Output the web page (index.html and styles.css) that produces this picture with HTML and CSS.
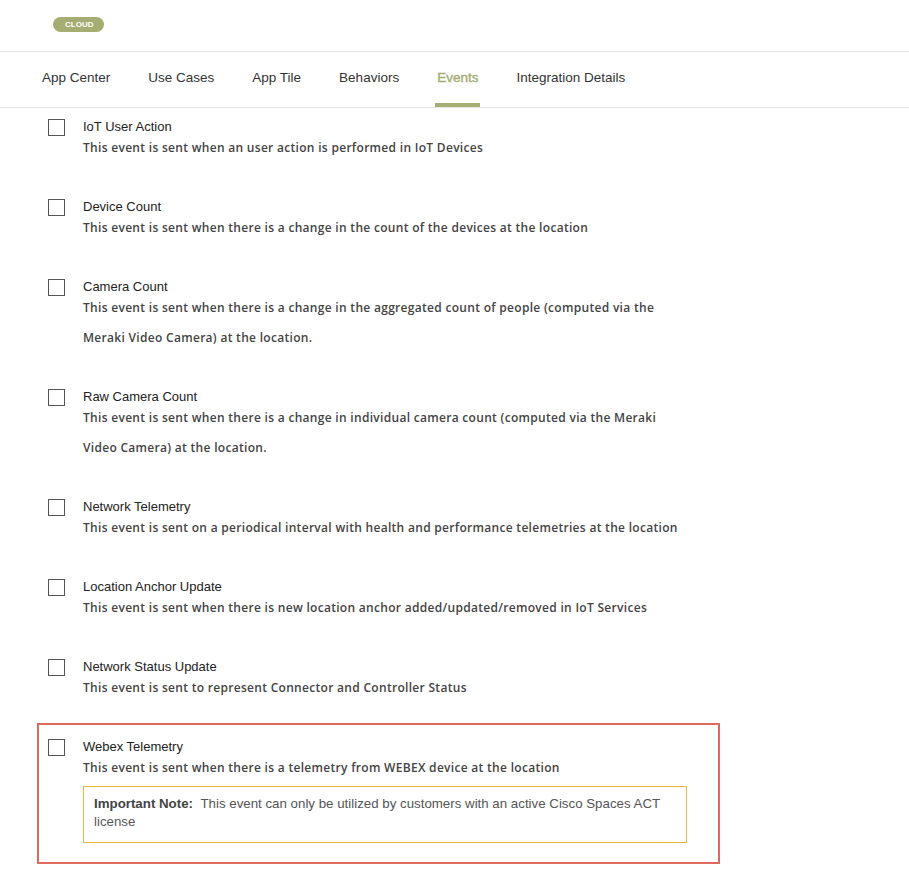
FILE: index.html
```html
<!DOCTYPE html>
<html lang="en">
<head>
  <meta charset="UTF-8">
  <title>Events</title>
  <link rel="stylesheet" href="styles.css">
</head>
<body>
  <div class="top">
    <span class="badge">CLOUD</span>
  </div>

  <nav class="tabs">
    <a class="tab">App Center</a>
    <a class="tab">Use Cases</a>
    <a class="tab">App Tile</a>
    <a class="tab">Behaviors</a>
    <a class="tab active">Events</a>
    <a class="tab">Integration Details</a>
  </nav>

  <div class="events">
    <div class="event">
      <span class="box"></span>
      <div class="body">
        <div class="name">IoT User Action</div>
        <div class="desc">This event is sent when an user action is performed in IoT Devices</div>
      </div>
    </div>

    <div class="event">
      <span class="box"></span>
      <div class="body">
        <div class="name">Device Count</div>
        <div class="desc">This event is sent when there is a change in the count of the devices at the location</div>
      </div>
    </div>

    <div class="event">
      <span class="box"></span>
      <div class="body">
        <div class="name">Camera Count</div>
        <div class="desc">This event is sent when there is a change in the aggregated count of people (computed via the<br>Meraki Video Camera) at the location.</div>
      </div>
    </div>

    <div class="event">
      <span class="box"></span>
      <div class="body">
        <div class="name">Raw Camera Count</div>
        <div class="desc">This event is sent when there is a change in individual camera count (computed via the Meraki<br>Video Camera) at the location.</div>
      </div>
    </div>

    <div class="event">
      <span class="box"></span>
      <div class="body">
        <div class="name">Network Telemetry</div>
        <div class="desc">This event is sent on a periodical interval with health and performance telemetries at the location</div>
      </div>
    </div>

    <div class="event">
      <span class="box"></span>
      <div class="body">
        <div class="name">Location Anchor Update</div>
        <div class="desc">This event is sent when there is new location anchor added/updated/removed in IoT Services</div>
      </div>
    </div>

    <div class="event">
      <span class="box"></span>
      <div class="body">
        <div class="name">Network Status Update</div>
        <div class="desc">This event is sent to represent Connector and Controller Status</div>
      </div>
    </div>

    <div class="event highlight">
      <span class="box"></span>
      <div class="body">
        <div class="name">Webex Telemetry</div>
        <div class="desc">This event is sent when there is a telemetry from WEBEX device at the location</div>
        <div class="note"><b>Important Note:</b> This event can only be utilized by customers with an active Cisco Spaces ACT license</div>
      </div>
    </div>
  </div>
</body>
</html>
```

FILE: styles.css
```css
body { margin: 0; background: #fff; font-family: "Liberation Sans", Arial, sans-serif; color: #222; }

.top { height: 52px; border-bottom: 1px solid #e6e6e6; padding-left: 53px; box-sizing: border-box; padding-top: 17px; }
.badge { display: inline-block; background: #a5ad72; color: #fff; font-size: 8px; font-weight: bold; line-height: 15px; height: 15px; padding: 0 11px 0 12px; border-radius: 8px; vertical-align: top; }

.tabs { display: flex; gap: 34px; padding-left: 40px; height: 56px; border-bottom: 1px solid #e6e6e6; box-sizing: border-box; }
.tab { padding: 0 2px; font-size: 13.5px; color: #333; line-height: 51px; border-bottom: 4px solid transparent; }
.tab.active { color: #a5ad72; -webkit-text-stroke: 0.4px #a5ad72; border-bottom-color: #a5ad72; }

.events { padding: 10px 0 0 37px; }
.event { display: flex; padding: 0 0 35px 11px; }
.box { width: 15px; height: 15px; border: 1px solid #555; flex: none; margin-top: 1px; margin-right: 18px; }
.name { font-size: 13px; color: #222; line-height: 18px; }
.desc { font-family: "Open Sans", sans-serif; font-size: 12px; letter-spacing: 0.3px; font-weight: 600; color: #444; line-height: 30px; margin-top: -3px; }

.highlight { width: 683px; box-sizing: border-box; border: 2px solid #de6a5e; padding: 13px 0 19px 9px; margin-top: -15px; }
.note { border: 1px solid #e6b83c; width: 604px; box-sizing: border-box; padding: 8px 10px 11px 10px; font-size: 13.3px; color: #555; line-height: 18px; margin-top: 3px; }
.note b { color: #444; margin-right: 4px; }
```
